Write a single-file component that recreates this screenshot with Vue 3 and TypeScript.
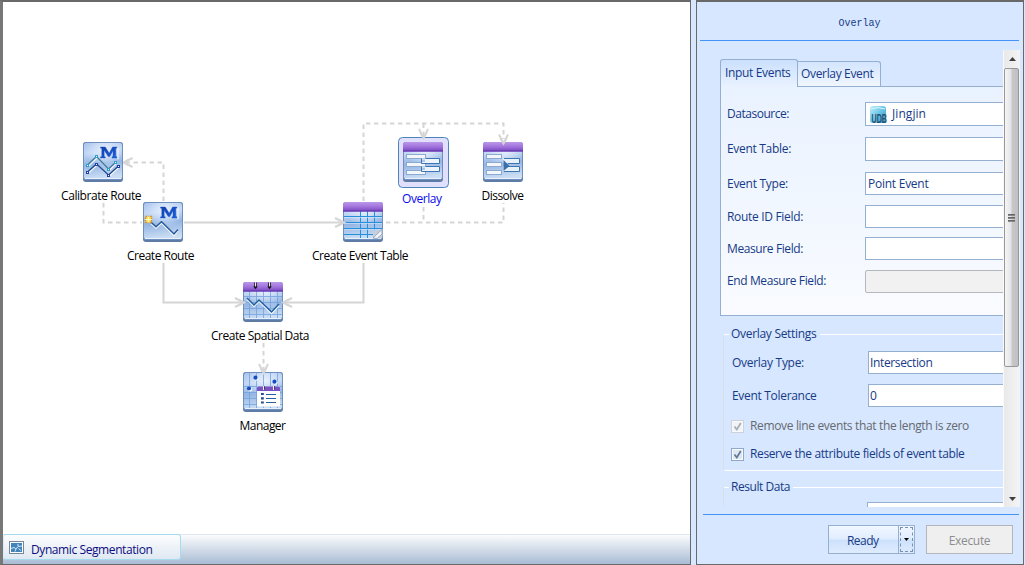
<script setup lang="ts">
interface Field {
  label: string
  value: string
  kind: 'tall' | 'normal' | 'disabled'
  width: number
  icon?: boolean
}
interface NodeLabel {
  text: string
  x: number
  y: number
  width: number
  active?: boolean
}

const fields: Field[] = [
  { label: 'Datasource:', value: 'Jingjin', kind: 'tall', width: 62, icon: true },
  { label: 'Event Table:', value: '', kind: 'tall', width: 64 },
  { label: 'Event Type:', value: 'Point Event', kind: 'normal', width: 61 },
  { label: 'Route ID Field:', value: '', kind: 'normal', width: 76 },
  { label: 'Measure Field:', value: '', kind: 'normal', width: 76 },
  { label: 'End Measure Field:', value: '', kind: 'disabled', width: 99 },
]

const labels: NodeLabel[] = [
  { text: 'Calibrate Route', x: 61, y: 200, width: 80.5 },
  { text: 'Create Route', x: 127, y: 260, width: 67.5 },
  { text: 'Create Event Table', x: 312, y: 260, width: 96.5 },
  { text: 'Overlay', x: 402, y: 203, width: 40, active: true },
  { text: 'Dissolve', x: 481.5, y: 200, width: 42.5 },
  { text: 'Create Spatial Data', x: 211, y: 340, width: 98.5 },
  { text: 'Manager', x: 239.5, y: 430, width: 46.5 },
]

// Spreads the letters of an element so that its text run takes the given width.
const vFit = {
  mounted(el: HTMLElement, binding: { value: number }) {
    const natural = el.getBoundingClientRect().width
    const count = (el.textContent ?? '').length
    if (count > 1) el.style.letterSpacing = `${(binding.value - natural) / count}px`
  },
}
</script>

<template>
  <div class="app">
    <section class="workspace">
      <svg class="canvas" width="687" height="532" viewBox="3 2 687 532">
        <defs>
          <linearGradient id="tile" x1="0" y1="0" x2="0.12" y2="1">
            <stop offset="0" stop-color="#a9c4ec" />
            <stop offset="0.3" stop-color="#c3d7f5" />
            <stop offset="0.6" stop-color="#94b5e3" />
            <stop offset="1" stop-color="#cbdef4" />
          </linearGradient>
          <radialGradient id="shine" cx="0.55" cy="0.2" r="0.5">
            <stop offset="0" stop-color="#f0f6ff" stop-opacity="0.8" />
            <stop offset="1" stop-color="#f0f6ff" stop-opacity="0" />
          </radialGradient>
          <linearGradient id="purple" x1="0" y1="0" x2="0" y2="1">
            <stop offset="0" stop-color="#bb98ea" />
            <stop offset="0.5" stop-color="#a173dc" />
            <stop offset="1" stop-color="#7544be" />
          </linearGradient>
          <linearGradient id="letter" x1="0" y1="0" x2="1" y2="1">
            <stop offset="0" stop-color="#123ca8" />
            <stop offset="1" stop-color="#1b62e0" />
          </linearGradient>
          <g id="base">
            <rect x="0" y="0" width="40" height="40" rx="3" fill="#5d7ba4" />
            <rect x="0.5" y="0.5" width="39" height="37" rx="2.5" fill="url(#tile)" stroke="#6f90bf" />
            <rect x="1" y="1" width="38" height="36" rx="2" fill="url(#shine)" />
            <path d="M2 36.5H38" stroke="#e9f1fb" />
          </g>
          <g id="cap">
            <path d="M0 9.5V3Q0 0 3 0H37Q40 0 40 3V9.5Z" fill="url(#purple)" />
            <path d="M0 9H40" stroke="#6032ab" />
          </g>
          <g id="em">
            <path d="M19 16.5V5.8H22.5L26.5 12L30.5 5.8H34.5V16.5" transform="translate(.5 .7)" fill="none" stroke="#e8f1fe" stroke-width="1.3" />
            <path d="M17.6 16V14.8H18.8V6.2H17.6V5H22.3L26.2 11.2L29.6 5H33.8V6.2H32.8V14.8H33.8V16H29V14.8H30V8.7L26.8 14.5H25.2L21.2 8.2V14.8H22.2V16Z" fill="url(#letter)" stroke="#174fc4" stroke-width="0.4" />
          </g>
          <path id="grid" d="M1 14.5H39M1 20.5H39M1 26.5H39M1 32.5H39M6.5 1V36M13.5 1V36M20.5 1V36M27.5 1V36M34.5 1V36" stroke="#6fa0dd" stroke-width="0.9" opacity="0.85" />
          <path id="head" d="M-9 -4.5L0 0L-9 4.5M-5 -3L0 0L-5 3" fill="none" stroke="#d5d5d5" stroke-width="2" />
        </defs>

        <g fill="none" stroke="#d5d5d5" stroke-width="2">
          <path d="M184 222.5H342" />
          <path d="M163.5 263V302.5H243" />
          <path d="M363.5 263V302.5H284" />
          <g stroke-dasharray="4.5 3.5">
            <path d="M163.5 201V162.5H126" />
            <path d="M103.5 203V222.5H142" />
            <path d="M363.5 201V123.5H503.5V139" />
            <path d="M423.5 123.5V136" />
            <path d="M386 222.5H503.5V203" />
            <path d="M423.5 207V222.5" />
            <path d="M263.5 343V370" />
          </g>
        </g>
        <use href="#head" transform="translate(123.5 162.5) rotate(180)" />

        <!-- Calibrate Route -->
        <g transform="translate(83 142)">
          <use href="#base" /><use href="#em" />
          <g fill="none" stroke="#fff" stroke-width="1.3" transform="translate(.8 1.1)">
            <path d="M4.5 23L13.5 14.5L25.5 27L32.5 20.5M4.5 30L13.5 22L25.5 33L35.5 24" />
          </g>
          <path d="M4.5 23L13.5 14.5L25.5 27L32.5 20.5" fill="none" stroke="#3d7a9e" stroke-width="1.4" />
          <path d="M4.5 30L13.5 22L25.5 33L35.5 24" fill="none" stroke="#234a90" stroke-width="1.4" />
          <g fill="#fff" stroke="#2a9fc6">
            <rect x="3.5" y="22.5" width="2" height="2" /><rect x="12.5" y="13.5" width="2" height="2" />
            <rect x="24.5" y="26.5" width="2" height="2" /><rect x="31.5" y="19.5" width="2" height="2" />
          </g>
          <g fill="#fff" stroke="#1d3fa5">
            <rect x="3.5" y="29.5" width="2" height="2" /><rect x="12.5" y="21.5" width="2" height="2" />
            <rect x="24.5" y="32.5" width="2" height="2" /><rect x="34.5" y="23.5" width="2" height="2" />
          </g>
        </g>

        <!-- Create Route -->
        <g transform="translate(143 202)">
          <use href="#base" /><use href="#em" />
          <path d="M8 21.5L13 26L18.5 21L31 33.5L35 28.5" fill="none" stroke="#fff" stroke-width="1.5" />
          <path d="M8 20.2L13 24.8L18.5 19.8L31 32L35 27.5" fill="none" stroke="#23589c" stroke-width="1.5" />
          <rect x="2.5" y="14.5" width="6" height="6" fill="#ffe45c" stroke="#d98a18" stroke-width="1.4" stroke-dasharray="1.4 1" />
          <path d="M5.5 14.5V20.5M2.5 17.5H8.5" stroke="#fffbc4" />
        </g>

        <!-- Create Event Table -->
        <g transform="translate(343 202)">
          <use href="#base" />
          <path d="M1 14.5H39M1 20.5H39M1 26.5H39M1 32.5H31M17.5 9V36M24.5 9V36M31.5 9V28" stroke="#2490dc" />
          <path d="M1 15.5H39M1 21.5H39M1 27.5H39" stroke="#d9e8fa" stroke-width="0.6" />
          <use href="#cap" />
          <path d="M30 36.5V28.5L33 29.5L39.5 27V34L38 36.5Z" fill="#c5cfdc" />
          <path d="M30 36L39 27.5V32L34 36.5Z" fill="#f5f7fa" stroke="#8a9bb0" stroke-width="0.8" />
        </g>

        <!-- Overlay, selected -->
        <rect x="398.5" y="137.5" width="50" height="50" rx="4" fill="#e0e0fc" stroke="#4a86bd" />
        <g transform="translate(403 142)">
          <use href="#base" /><use href="#cap" />
          <g fill="#f3f7fc" stroke="#8caacf">
            <rect x="3.5" y="12.5" width="19" height="4" />
            <rect x="3.5" y="20.5" width="19" height="4" />
            <rect x="3.5" y="28.5" width="19" height="4" />
          </g>
          <g fill="#eef4fb" stroke="#3c76b2">
            <path d="M22.5 16.5H36.5V21.5H18.5V16.5M22.5 24.5H36.5V29.5H18.5V24.5" />
          </g>
          <path d="M19 17.5H22V20H19ZM19 25.5H22V28H19Z" fill="#a9c9e7" />
        </g>

        <!-- Dissolve -->
        <g transform="translate(483 142)">
          <use href="#base" /><use href="#cap" />
          <g fill="#f3f7fc" stroke="#8caacf">
            <rect x="3.5" y="12.5" width="15" height="4" />
            <rect x="3.5" y="20.5" width="15" height="4" />
            <rect x="3.5" y="28.5" width="15" height="4" />
          </g>
          <path d="M20 16.5H36.5V21H20ZM20 24.5H36.5V29H20Z" fill="#e8f0fa" />
          <path d="M21 16.5H36.5V21.5H25M25 24.5H36.5V29.5H21" fill="none" stroke="#3c76b2" />
          <path d="M20.5 18V29L26.5 24Z" fill="#3a6fa8" />
        </g>

        <!-- Create Spatial Data -->
        <g transform="translate(243 282)">
          <use href="#base" /><use href="#grid" /><use href="#cap" />
          <path d="M4 17.3L11 24.3L16 19.3L28.5 31.5L36 23.5" fill="none" stroke="#fff" stroke-width="1.4" />
          <path d="M4 16L11 23L16 18L28.5 30L36 22" fill="none" stroke="#215f9f" stroke-width="1.5" />
          <path d="M12.5 0.5V4.5M26.5 0.5V4.5" stroke="#e8e8ee" />
          <path d="M11.5 0.5V5M13.5 0.5V5M25.5 0.5V5M27.5 0.5V5" stroke="#37303f" />
          <path d="M10.2 4.5H14.8L12.5 7.3ZM24.2 4.5H28.8L26.5 7.3Z" fill="#17151d" />
        </g>

        <!-- Manager -->
        <g transform="translate(243 372)">
          <use href="#base" /><use href="#grid" />
          <g fill="#fff"><circle cx="13.4" cy="6.4" r="2.2" /><circle cx="32.4" cy="10.4" r="2.2" /><circle cx="6.9" cy="17.4" r="2.2" /></g>
          <g fill="#164cc3"><circle cx="12.5" cy="5.7" r="2.1" /><circle cx="31.5" cy="9.7" r="2.1" /><circle cx="6" cy="16.5" r="2.1" /></g>
          <rect x="14" y="14.5" width="23" height="20" rx="1" fill="#fff" />
          <path d="M14 19V16Q14 14.5 15.5 14.5H35.5Q37 14.5 37 16V19Z" fill="#7a52c4" />
          <path d="M20.5 14V18M30.5 14V18" stroke="#f0f0f8" />
          <path d="M21.5 14V17.5M31.5 14V17.5" stroke="#333" stroke-width="0.7" />
          <path d="M18 22H20.8M18 26.3H20.8M18 30.5H20.8" stroke="#1e4d90" stroke-width="2.2" />
          <path d="M23 22.5H33M23 26.5H33M23 30.5H33" stroke="#2a5f9e" />
        </g>

        <use href="#head" transform="translate(344 222.5)" />
        <use href="#head" transform="translate(244 302.5)" />
        <use href="#head" transform="translate(283 302.5) rotate(180)" />
        <use href="#head" transform="translate(423.5 138) rotate(90)" />
        <use href="#head" transform="translate(503.5 143.5) rotate(90)" />
        <use href="#head" transform="translate(263.5 373) rotate(90)" />

        <text
          v-for="label in labels"
          :key="label.text"
          :x="label.x"
          :y="label.y"
          :textLength="label.width"
          class="node-label"
          :class="{ active: label.active }"
        >{{ label.text }}</text>
      </svg>

      <div class="taskbar">
        <div class="task">
          <svg width="15" height="13" viewBox="0 0 15 13">
            <rect x="0.5" y="0.5" width="14" height="12" fill="#fff" stroke="#76879c" />
            <rect x="2" y="2" width="11" height="9" fill="#4285bd" />
            <path d="M2 7.5L5 6.5L7 8L9 5.5L13 5M9 5V3M7 8L6 10.5M9.5 7.5L12 9.5" fill="none" stroke="#e5f2fc" stroke-width="0.9" />
          </svg>
          <span v-fit="121.5" class="task-text">Dynamic Segmentation</span>
        </div>
      </div>
    </section>

    <aside class="panel">
      <header class="title">Overlay</header>
      <div class="scroller">
        <div class="view">
          <div class="tabs">
            <div class="tab current"><span v-fit="65.5">Input Events</span></div>
            <div class="tab"><span v-fit="72.5">Overlay Event</span></div>
          </div>
          <div class="sheet">
            <div v-for="field in fields" :key="field.label" class="row">
              <div class="caption"><span v-fit="field.width">{{ field.label }}</span></div>
              <div class="input" :class="field.kind">
                <svg v-if="field.icon" class="db" width="20" height="20" viewBox="0 0 20 20">
                  <defs>
                    <linearGradient id="udb" x1="0" y1="0" x2="1" y2="1">
                      <stop offset="0" stop-color="#c2effb" />
                      <stop offset="0.5" stop-color="#6cc4e6" />
                      <stop offset="1" stop-color="#3a94c4" />
                    </linearGradient>
                  </defs>
                  <rect x="1" y="1" width="16" height="17" rx="3" fill="url(#udb)" />
                  <path d="M2 4Q9 1 16 4" fill="none" stroke="#d8f6fd" />
                  <text x="2.5" y="18" class="udb-text" textLength="15.5" lengthAdjust="spacingAndGlyphs">UDB</text>
                </svg>
                <span v-if="field.value" v-fit="field.icon ? 34 : 60.5">{{ field.value }}</span>
              </div>
            </div>
          </div>

          <fieldset class="group settings">
            <legend><span v-fit="85.5">Overlay Settings</span></legend>
            <div class="row">
              <div class="caption"><span v-fit="72">Overlay Type:</span></div>
              <div class="input normal"><span v-fit="62.5">Intersection</span></div>
            </div>
            <div class="row">
              <div class="caption"><span v-fit="84.5">Event Tolerance</span></div>
              <div class="input normal"><span>0</span></div>
            </div>
            <div class="check off">
              <i class="box"><svg width="11" height="11" viewBox="0 0 11 11"><path d="M2.5 5.5L4.8 8.5L8.8 2" /></svg></i>
              <span v-fit="219">Remove line events that the length is zero</span>
            </div>
            <div class="check">
              <i class="box"><svg width="11" height="11" viewBox="0 0 11 11"><path d="M2.5 5.5L4.8 8.5L8.8 2" /></svg></i>
              <span v-fit="214.5">Reserve the attribute fields of event table</span>
            </div>
          </fieldset>

          <fieldset class="group result">
            <legend><span v-fit="59">Result Data</span></legend>
            <div class="row">
              <div class="caption"></div>
              <div class="input normal"></div>
            </div>
          </fieldset>
        </div>
        <div class="scrollbar">
          <div class="arrow"><svg width="7" height="4" viewBox="0 0 7 4"><path d="M0 4L3.5 0L7 4Z" fill="#404040" /></svg></div>
          <div class="thumb"><i></i><i></i><i></i></div>
          <div class="arrow"><svg width="7" height="4" viewBox="0 0 7 4"><path d="M0 0L3.5 4L7 0Z" fill="#404040" /></svg></div>
        </div>
      </div>
      <footer class="actions">
        <div class="button ready">
          <div class="ready-main"><span v-fit="31.5">Ready</span></div>
          <div class="ready-drop"><svg width="5" height="3" viewBox="0 0 5 3"><path d="M0 0H5L2.5 3Z" fill="#000" /></svg></div>
        </div>
        <div class="button execute"><span v-fit="41.5">Execute</span></div>
      </footer>
    </aside>
  </div>
</template>

<style>
body { margin: 0; overflow: hidden; background: #d6e7ff; }
</style>

<style scoped>
* { box-sizing: border-box; }
.app {
  width: 1025px;
  height: 565px;
  display: flex;
  gap: 5px;
  overflow: hidden;
  background: #d6e7ff;
  color: #163a86;
  font: 12px/16px "Open Sans", "Noto Sans", sans-serif;
  white-space: nowrap;
}
.workspace {
  width: 691px;
  height: 565px;
  display: flex;
  flex-direction: column;
  background: #fff;
  border: 1px solid #696969;
  border-width: 2px 1px 1px 3px;
  border-left-color: #777;
}
.canvas { display: block; flex: none; }
.node-label { font-size: 12px; fill: #000; }
.node-label.active { fill: #0a0af0; }
.taskbar {
  flex: 1;
  border-top: 1px solid #dfe8f1;
  background: linear-gradient(#fbfcfd, #a9bcd4);
}
.task {
  width: 178px;
  height: 26px;
  margin-top: -1px;
  display: flex;
  align-items: center;
  gap: 7px;
  padding: 1px 0 0 5px;
  border: 1px solid #a5dbee;
  border-left-color: #d5eef7;
  border-radius: 3px;
  background: linear-gradient(#fdfdfe, #dfe8f2);
  color: #0c0c80;
}
.task-text { padding-top: 5px; }
.panel {
  width: 328px;
  height: 565px;
  display: flex;
  flex-direction: column;
  border: 1px solid #696969;
  border-top-width: 2px;
  background: #d6e7ff;
}
.title {
  height: 39px;
  margin: 0 4px 0 3px;
  border-bottom: 1px solid #4494f8;
  font: 10px/43px "Liberation Mono", monospace;
  text-align: center;
}
.scroller { display: flex; height: 457px; margin: 9px 3px 0 6px; }
.view { width: 300px; height: 457px; padding: 9px 0 0 17px; overflow: hidden; }
.tabs { display: flex; height: 27px; align-items: flex-end; }
.tab {
  height: 25px;
  width: 83px;
  padding: 4px 0 0 3px;
  border: 1px solid #95afd0;
  border-left: 0;
  border-bottom: 0;
  border-radius: 0 3px 0 0;
  background: linear-gradient(#d3e5fe, #f0f6ff);
}
.tab.current {
  width: 78px;
  height: 28px;
  margin-bottom: -1px;
  padding: 5px 0 0 4px;
  border-left: 1px solid #95afd0;
  border-radius: 3px 3px 0 0;
  background: linear-gradient(#cbe0fd, #e9f2ff);
  z-index: 1;
}
.sheet {
  width: 300px;
  height: 230px;
  padding: 15px 0 0 6px;
  border: 1px solid #95afd0;
  background: linear-gradient(#e9f2ff, #f9fbff);
  display: grid;
  grid-template-rows: 35px 35px 33px 32px 33px 23px;
}
.row { display: flex; align-items: flex-start; }
.caption { width: 138px; padding-top: 4px; flex: none; }
.sheet .row:last-child .caption { padding-top: 3px; }
.input {
  width: 200px;
  height: 23px;
  flex: none;
  display: flex;
  align-items: center;
  padding-left: 2px;
  border: 1px solid #95afd0;
  background: #fff;
}
.input.tall { height: 24px; }
.input.disabled { border-color: #b4b8bd; border-radius: 2px; background: #f1f1f1; }
.db { flex: none; margin: 1px 3px 0 1px; }
.udb-text { font: bold 12px "Liberation Sans", sans-serif; fill: #285274; }
.group {
  width: 320px;
  margin: 0 0 0 3px;
  padding: 0 0 0 8px;
  border: 1px solid #fff;
  border-left-color: #d9dfe6;
  border-bottom-width: 1px;
  border-radius: 3px;
  min-width: 0;
}
.group legend { padding: 0 3px 0 2px; margin-left: -3px; height: 16px; }
.settings { height: 145px; margin-top: 10px; }
.settings .row { height: 33px; }
.settings .caption { width: 136px; padding-left: 0; }
.settings .input { padding-left: 1px; }
.settings legend + .row { margin-top: 9px; }
.check { display: flex; align-items: center; gap: 6px; height: 28px; margin-left: -1px; }
.check.off { color: #66696e; margin-top: -5px; }
.box { display: flex; width: 13px; height: 13px; border: 1px solid #8fa9ca; background: #dfe7f1; box-shadow: inset 0 0 0 1px #f8fafc; }
.box path { fill: none; stroke: #62789a; stroke-width: 1.7; }
.off .box { border-color: #ccd2da; background: #f1f3f6; }
.off .box path { stroke: #a7adb5; }
.result { height: 80px; margin-top: 8px; }
.result .caption { width: 135px; }
.result .row { margin-top: 7px; }
.scrollbar {
  width: 17px;
  height: 457px;
  margin-left: 0;
  border-left: 1px solid #fafafa;
  background: linear-gradient(90deg, #e9e9e9, #f4f4f4);
  display: flex;
  flex-direction: column;
  justify-content: flex-start;
}
.arrow { height: 18px; display: flex; align-items: center; justify-content: center; }
.arrow:last-child { margin-top: auto; height: 17px; }
.thumb {
  height: 299px;
  width: 15px;
  border: 1px solid #989898;
  border-radius: 2px;
  background: linear-gradient(90deg, #f6f6f6, #e4e4e6 45%, #c8c8cb 55%, #c0c0c4);
  display: flex;
  flex-direction: column;
  align-items: center;
  justify-content: center;
  gap: 1px;
}
.thumb i { width: 7px; height: 2px; background: linear-gradient(#555, #9a9a9a); }
.actions {
  height: 50px;
  margin: 7px 4px 0 6px;
  padding: 10px 6px 0 0;
  border-top: 1px solid #4494f8;
  display: flex;
  justify-content: flex-end;
  gap: 11px;
}
.button { width: 87px; height: 29px; display: flex; border: 1px solid #95afd0; }
.ready { background: linear-gradient(#f2f7ff, #e0edff 48%, #cde1fc 52%, #dfecfe); }
.ready-main { width: 70px; padding: 7px 0 0 18px; border-right: 1px solid #95afd0; }
.ready-drop { flex: 1; margin: 1px; border: 1px dashed #7892b5; display: flex; align-items: center; justify-content: center; }
.execute { justify-content: center; padding-top: 7px; border-color: #b3b7bc; background: #efefef; color: #8b8d90; }
</style>
